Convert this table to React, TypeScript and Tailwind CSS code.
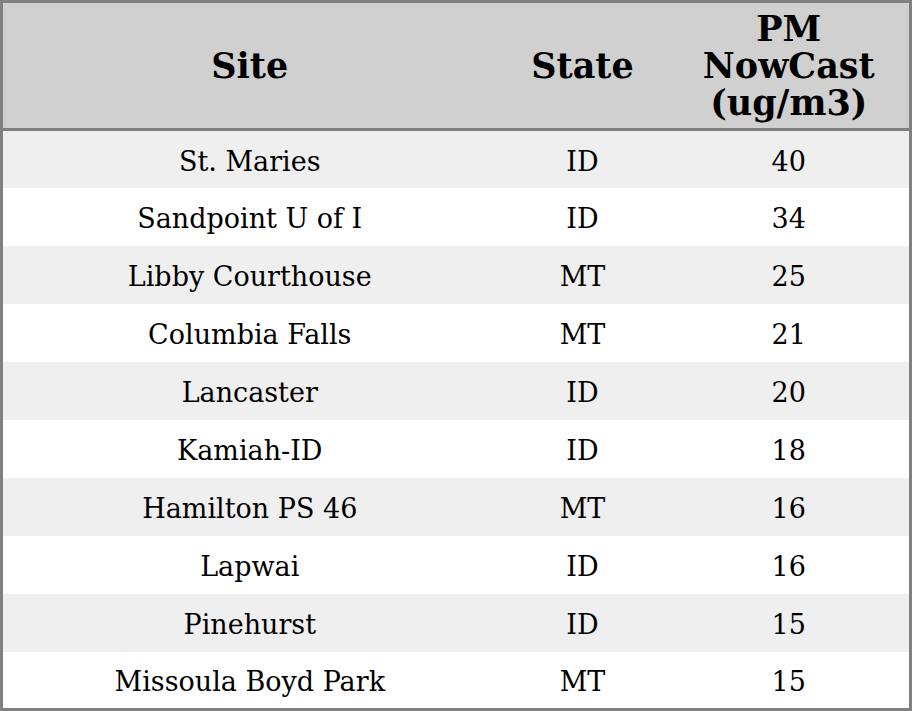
const rows: [string, string, number][] = [
  ['St. Maries', 'ID', 40],
  ['Sandpoint U of I', 'ID', 34],
  ['Libby Courthouse', 'MT', 25],
  ['Columbia Falls', 'MT', 21],
  ['Lancaster', 'ID', 20],
  ['Kamiah-ID', 'ID', 18],
  ['Hamilton PS 46', 'MT', 16],
  ['Lapwai', 'ID', 16],
  ['Pinehurst', 'ID', 15],
  ['Missoula Boyd Park', 'MT', 15],
]

export default function App() {
  return (
    <div className="w-[912px] h-[711px] bg-white font-['DejaVu_Serif',serif] text-black">
      <table className="w-full border-collapse border-[3px] border-[#808080] text-center">
        <thead>
          <tr className="bg-[#d0d0d0] h-[128px] border-b-[3px] border-[#808080]">
            <th className="w-[495px] text-[35px] font-bold leading-[37px]">Site</th>
            <th className="w-[172px] text-[35px] font-bold leading-[37px]">State</th>
            <th className="text-[35px] font-bold leading-[37px]">
              PM
              <br />
              NowCast
              <br />
              (ug/m3)
            </th>
          </tr>
        </thead>
        <tbody>
          {rows.map(([site, state, pm], i) => (
            <tr key={site} className={`h-[58px] text-[27px] ${i % 2 === 0 ? 'bg-[#efefef]' : 'bg-white'}`}>
              <td className="pt-[5px]">{site}</td>
              <td className="pt-[5px]">{state}</td>
              <td className="pt-[5px]">{pm}</td>
            </tr>
          ))}
        </tbody>
      </table>
    </div>
  )
}
